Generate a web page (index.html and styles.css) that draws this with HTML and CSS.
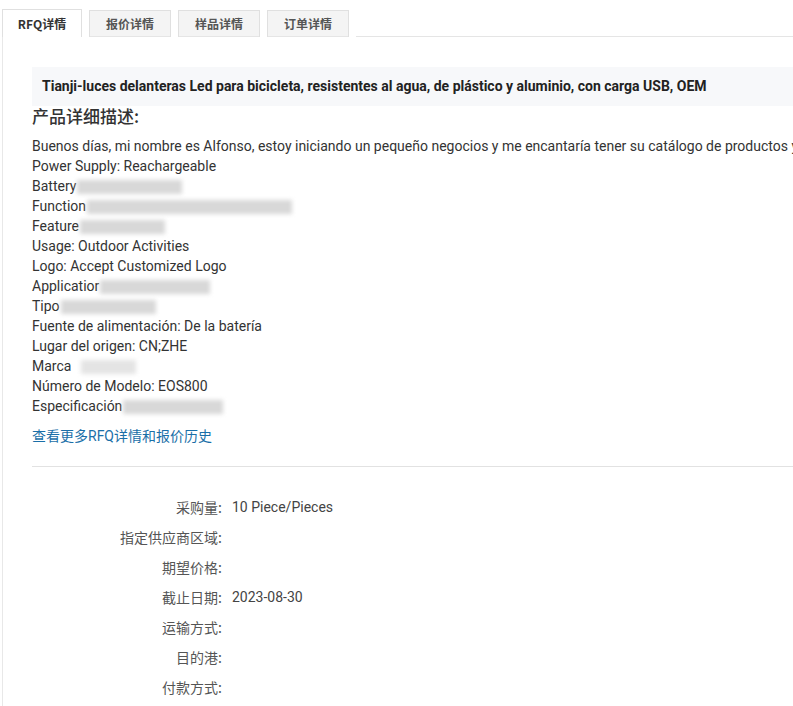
FILE: index.html
```html
<!DOCTYPE html>
<html lang="zh">
<head>
<meta charset="utf-8">
<title>RFQ详情</title>
<link rel="stylesheet" href="styles.css">
</head>
<body>
<div class="page">
  <div class="tabs">
    <div class="tab active">RFQ详情</div>
    <div class="tab">报价详情</div>
    <div class="tab">样品详情</div>
    <div class="tab">订单详情</div>
    <div class="tab-rest"></div>
  </div>
  <div class="panel">
    <div class="title-box">Tianji-luces delanteras Led para bicicleta, resistentes al agua, de plástico y aluminio, con carga USB, OEM</div>
    <h2 class="heading">产品详细描述:</h2>
    <div class="desc">
      <div class="line">Buenos días, mi nombre es Alfonso, estoy iniciando un pequeño negocios y me encantaría tener su catálogo de productos y precios</div>
      <div class="line">Power Supply: Reachargeable</div>
      <div class="line">Battery<span class="blur w105"></span></div>
      <div class="line">Function<span class="blur w205"></span></div>
      <div class="line">Feature<span class="blur w85"></span></div>
      <div class="line">Usage: Outdoor Activities</div>
      <div class="line">Logo: Accept Customized Logo</div>
      <div class="line">Applicatior<span class="blur w110"></span></div>
      <div class="line">Tipo<span class="blur w95"></span></div>
      <div class="line">Fuente de alimentación: De la batería</div>
      <div class="line">Lugar del origen: CN;ZHE</div>
      <div class="line">Marca<span class="blur light w55"></span></div>
      <div class="line">Número de Modelo: EOS800</div>
      <div class="line">Especificación<span class="blur w100"></span></div>
    </div>
    <a class="more" href="#">查看更多RFQ详情和报价历史</a>
    <div class="divider"></div>
    <div class="details">
      <div class="row"><span class="label">采购量:</span><span class="value">10 Piece/Pieces</span></div>
      <div class="row"><span class="label">指定供应商区域:</span><span class="value"></span></div>
      <div class="row"><span class="label">期望价格:</span><span class="value"></span></div>
      <div class="row"><span class="label">截止日期:</span><span class="value">2023-08-30</span></div>
      <div class="row"><span class="label">运输方式:</span><span class="value"></span></div>
      <div class="row"><span class="label">目的港:</span><span class="value"></span></div>
      <div class="row"><span class="label">付款方式:</span><span class="value"></span></div>
    </div>
  </div>
</div>
</body>
</html>
```
FILE: styles.css
```css
html, body {
  margin: 0;
  padding: 0;
  background: #fff;
  overflow: hidden;
}
body {
  font-family: Roboto, "Noto Sans CJK SC", sans-serif;
  color: #333;
}
.page {
  padding: 9px 0 0 2px;
  width: 900px;
}
.tabs {
  display: flex;
  align-items: flex-end;
  height: 28px;
}
.tab {
  box-sizing: border-box;
  width: 82px;
  height: 27px;
  margin-right: 7px;
  border: 1px solid #e0e0e0;
  border-bottom: none;
  background: #f4f4f4;
  color: #555;
  font-family: "Noto Sans CJK SC", sans-serif;
  font-size: 12px;
  font-weight: bold;
  line-height: 26px;
  text-align: center;
  box-shadow: inset 0 -1px 0 #e5e5e5;
}
.tab.active {
  width: 80px;
  height: 28px;
  background: #fff;
  color: #333;
  box-shadow: none;
  line-height: 27px;
}
.tab:last-of-type { margin-right: 0; }
.tab-rest {
  flex: 1;
  border-bottom: 1px solid #e5e5e5;
}
.panel {
  border-left: 1px solid #e8e8e8;
  padding: 30px 0 20px 29px;
}
.title-box {
  background: #f7f8fa;
  height: 39px;
  line-height: 39px;
  padding-left: 10px;
  font-size: 14px;
  font-weight: bold;
  color: #222;
  white-space: nowrap;
}
.heading {
  margin: 0 0 10px;
  font-family: "Noto Sans CJK SC", sans-serif;
  font-size: 17px;
  font-weight: 500;
  line-height: 20px;
  color: #333;
}
.desc {
  font-size: 14px;
  line-height: 20px;
  color: #333;
}
.line {
  white-space: nowrap;
}
.blur {
  display: inline-block;
  vertical-align: middle;
  height: 14px;
  margin-left: 1px;
  background: #d8d8d8;
  filter: blur(2px);
}
.blur.light { background: #e4e4e4; margin-left: 10px; }
.w105 { width: 105px; }
.w205 { width: 205px; }
.w85 { width: 85px; }
.w110 { width: 110px; }
.w95 { width: 95px; }
.w55 { width: 55px; }
.w100 { width: 100px; }
.more {
  display: block;
  margin-top: 10px;
  font-size: 14px;
  line-height: 20px;
  color: #1a6fa8;
  text-decoration: none;
}
.divider {
  margin-top: 20px;
  height: 1px;
  background: #e2e2e2;
  width: 761px;
}
.details {
  margin-top: 25px;
}
.row {
  display: flex;
  height: 30px;
  align-items: center;
  font-size: 14px;
}
.label {
  width: 190px;
  text-align: right;
  color: #555;
  font-family: "Noto Sans CJK SC", sans-serif;
}
.value {
  margin-left: 10px;
  color: #444;
}
```
